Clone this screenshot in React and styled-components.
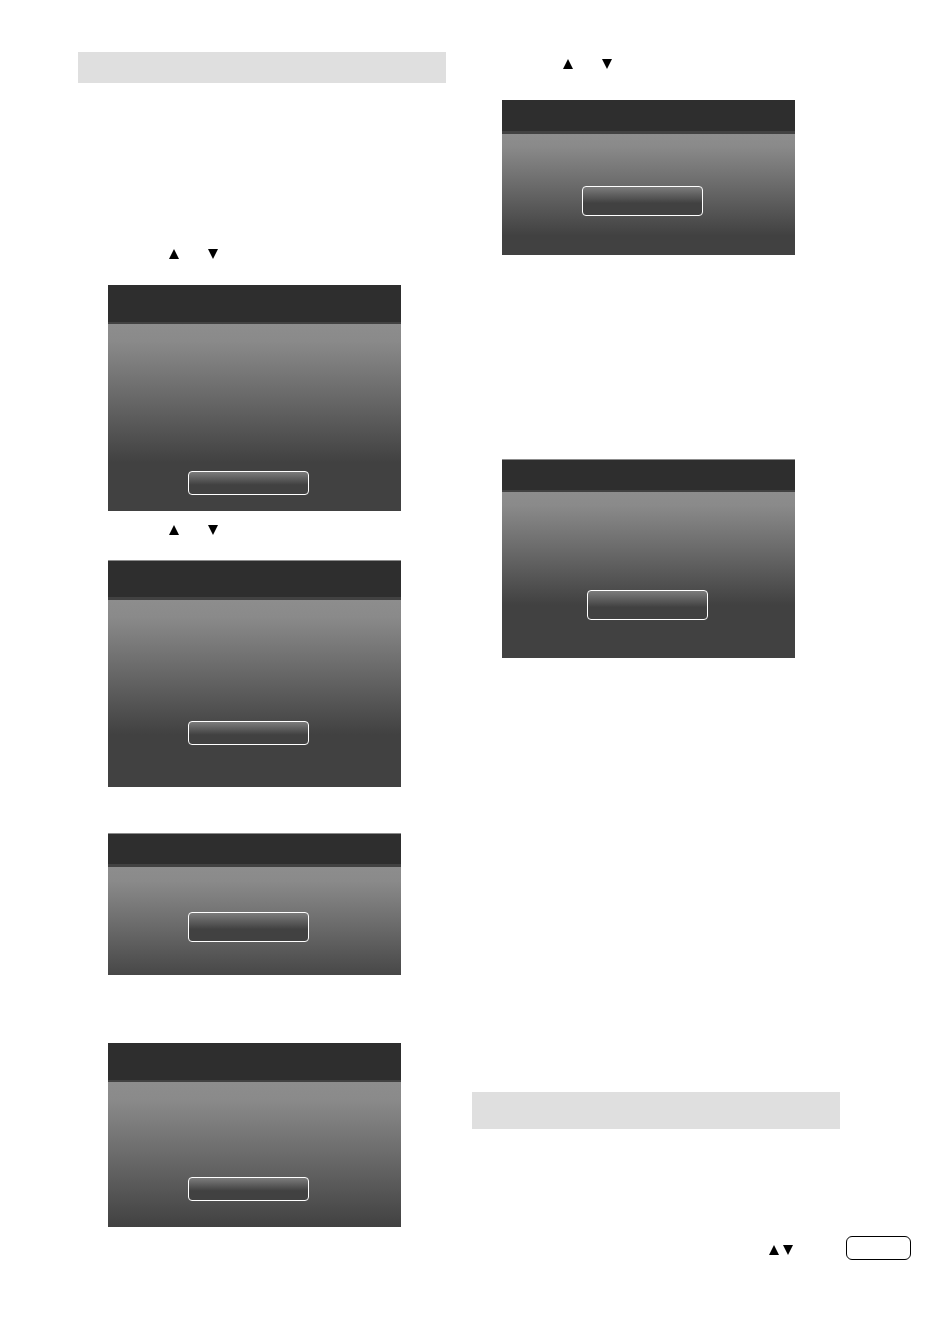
import styled, { createGlobalStyle } from 'styled-components';

const App = () => {
  return (
    <>
      <GlobalStyle />
      <Page>
        <Columns>
          <Column>
            <Heading $height={31} />
            <Hint $space={166}>
              <ArrowUp />
              <ArrowDown />
            </Hint>
            <Dialog space={26} title={37} line={2} top={147} bottom={16} fade={74} />
            <Hint $space={14}>
              <ArrowUp />
              <ArrowDown />
            </Hint>
            <Dialog space={25} edge title={36} line={3} top={121} bottom={42} fade={72} />
            <Dialog space={46} edge title={30} line={3} top={45} bottom={33} fade={108} tall />
            <Dialog space={68} title={37} line={2} top={95} bottom={26} fade={100} />
          </Column>
          <Column>
            <Hint $space={7}>
              <ArrowUp />
              <ArrowDown />
            </Hint>
            <Dialog space={31} title={31} line={3} top={52} bottom={39} fade={84} tall />
            <Dialog space={204} edge title={30} line={2} top={98} bottom={38} left={85} fade={68} tall />
            <Heading $height={37} $space={434} />
          </Column>
        </Columns>
        <Footer>
          <Arrows>
            <ArrowUp />
            <ArrowDown />
          </Arrows>
          <PageNumber />
        </Footer>
      </Page>
    </>
  );
};

const ArrowUp = () => (
  <Arrow viewBox="0 0 10 10" aria-hidden="true">
    <path d="M5 0 L10 10 H0 Z" />
  </Arrow>
);

const ArrowDown = () => (
  <Arrow viewBox="0 0 10 10" aria-hidden="true">
    <path d="M0 0 H10 L5 10 Z" />
  </Arrow>
);

const Dialog = ({ space, edge, title, line, top, bottom, left = 80, fade, tall }) => (
  <Screen $space={space} $edge={edge}>
    <TitleBar $height={title} $line={line} />
    <ScreenBody $top={top} $bottom={bottom} $left={left} $fade={fade}>
      <ScreenButton type="button" aria-label="Select" $tall={tall} />
    </ScreenBody>
  </Screen>
);

const GlobalStyle = createGlobalStyle`
  * {
    box-sizing: border-box;
  }
  body {
    margin: 0;
    background: #fff;
    color: #000;
    font-family: 'Liberation Sans', sans-serif;
  }
`;

const Page = styled.main`
  padding: 52px 22px 57px 78px;
`;

const Columns = styled.div`
  display: grid;
  grid-template-columns: 1fr 1fr;
  gap: 26px;
  padding-right: 71px;
`;

const Column = styled.section`
  display: flex;
  flex-direction: column;
`;

const Heading = styled.header`
  height: ${(props) => props.$height}px;
  margin-top: ${(props) => props.$space || 0}px;
  background: #dfdfdf;
`;

const Arrow = styled.svg`
  display: block;
  width: 10px;
  height: 10px;
  fill: currentColor;
`;

const Hint = styled.div`
  display: flex;
  gap: 29px;
  margin-top: ${(props) => props.$space}px;
  padding-left: 91px;
`;

const Screen = styled.div`
  margin: ${(props) => props.$space}px 45px 0 30px;
  border-top: ${(props) => (props.$edge ? '1px solid #8c8c8c' : 'none')};
`;

const TitleBar = styled.div`
  height: ${(props) => props.$height + props.$line}px;
  border-bottom: ${(props) => props.$line}px solid #424242;
  background: #2e2e2e;
`;

const ScreenBody = styled.div`
  display: flex;
  padding: ${(props) => `${props.$top}px 0 ${props.$bottom}px ${props.$left}px`};
  background: linear-gradient(
    #8d8d8d,
    #8a8a8a ${(props) => Math.round(props.$fade * 0.12)}%,
    #6b6b6b ${(props) => Math.round(props.$fade * 0.5)}%,
    #414141 ${(props) => props.$fade}%
  );
`;

const ScreenButton = styled.button`
  width: 121px;
  height: ${(props) => (props.$tall ? 30 : 24)}px;
  padding: 0;
  border: 1px solid #fff;
  border-radius: 4px;
  background: linear-gradient(#7c7c7c, #414141 58%);
`;

const Footer = styled.footer`
  display: flex;
  align-items: flex-end;
  justify-content: flex-end;
  gap: 53px;
  margin-top: 9px;
`;

const Arrows = styled.div`
  display: flex;
  gap: 4px;
  padding-bottom: 5px;
`;

const PageNumber = styled.div`
  width: 65px;
  height: 24px;
  border: 1px solid #000;
  border-radius: 6px;
`;

export default App;
